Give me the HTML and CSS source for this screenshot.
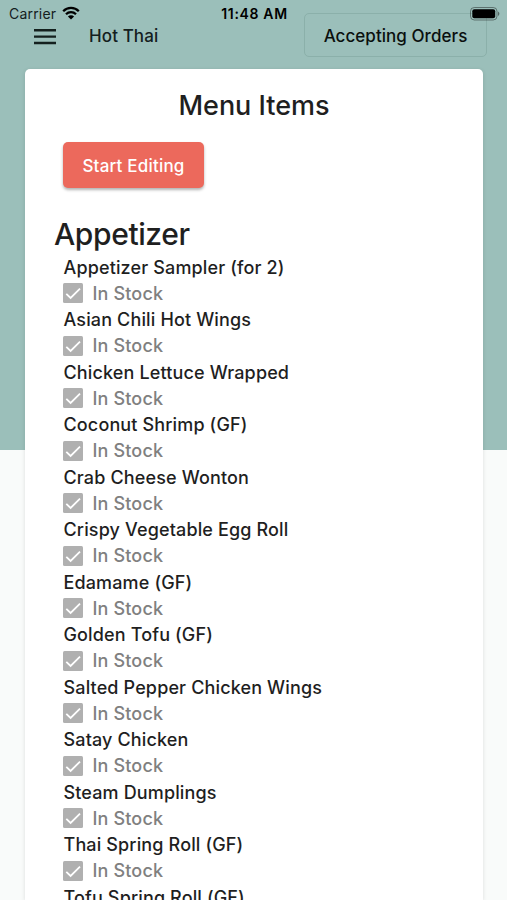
FILE: index.html
```
<!DOCTYPE html>
<html lang="en">

<head>
    <meta charset="utf-8">
    <title>Hot Thai - Menu Items</title>
    <link rel="stylesheet" href="styles.css">
</head>

<body>
    <div class="status-bar">
        <div class="carrier">
            <span>Carrier</span>
            <svg class="wifi" viewBox="0 0 18 14">
                <path d="M1.2 5.2a11 11 0 0 1 15.6 0M4 8.2a7.1 7.1 0 0 1 10 0" fill="none" stroke="#000" stroke-width="2.3" />
                <path d="M9 13.6L5.9 10.5a4.4 4.4 0 0 1 6.2 0z" />
            </svg>
        </div>
        <span class="time">11:48 AM</span>
        <div class="power">
            <svg class="battery" viewBox="0 0 30 14">
                <rect x="0.5" y="0.5" width="26.5" height="12.5" rx="3.8" fill="none" stroke="#000" stroke-opacity="0.4" />
                <rect x="2.3" y="2.3" width="22.9" height="8.9" rx="2" />
                <path d="M28 4.5a2.6 2.6 0 0 1 0 4.6z" fill-opacity="0.45" />
            </svg>
        </div>
    </div>

    <header class="app-bar">
        <svg class="menu-icon" viewBox="0 0 22 16">
            <path d="M0 0h22v2.4H0zM0 6.4h22v2.4H0zM0 12.8h22v2.4H0z" />
        </svg>
        <span class="restaurant">Hot Thai</span>
        <button class="orders-button">Accepting Orders</button>
    </header>

    <main class="card">
        <h1>Menu Items</h1>
        <button class="edit-button">Start Editing</button>
        <h2>Appetizer</h2>
        <ul id="items" class="items"></ul>
    </main>

    <script>
        var names = [
            'Appetizer Sampler (for 2)',
            'Asian Chili Hot Wings',
            'Chicken Lettuce Wrapped',
            'Coconut Shrimp (GF)',
            'Crab Cheese Wonton',
            'Crispy Vegetable Egg Roll',
            'Edamame (GF)',
            'Golden Tofu (GF)',
            'Salted Pepper Chicken Wings',
            'Satay Chicken',
            'Steam Dumplings',
            'Thai Spring Roll (GF)',
            'Tofu Spring Roll (GF)'
        ];
        var items = document.getElementById('items');

        names.forEach(name => {
            var item = document.createElement('li');
            item.innerHTML = `
                <div class="name">${name}</div>
                <div class="stock">
                    <svg class="checkbox" viewBox="0 0 20 20">
                        <rect width="20" height="20" rx="1.5" fill="#b0b0b0" />
                        <path d="M3.3 10.8l4.3 4.2L17 5.6" fill="none" stroke="#fff" stroke-width="1.8" />
                    </svg>
                    <span>In Stock</span>
                </div>`;
            items.appendChild(item);
        });
    </script>
</body>

</html>
```
FILE: styles.css
```
* {
    box-sizing: border-box;
}

body {
    margin: 0;
    height: 900px;
    overflow: hidden;
    background: linear-gradient(#9bbfba 450px, #f9fbfa 450px);
    color: #1f1f1f;
    font-family: Inter, "Liberation Sans", sans-serif;
}

button {
    font-family: inherit;
    font-weight: 500;
}

/* sits on top of the app bar */
.status-bar {
    position: absolute;
    top: 0;
    left: 0;
    right: 0;
    z-index: 1;
    display: flex;
    height: 27px;
    padding: 0 7px 0 9px;
    align-items: center;
    color: #000;
    font-size: 14px;
}

.carrier {
    display: flex;
    flex: 1;
    align-items: center;
    gap: 6px;
    letter-spacing: 0.2px;
    color: #14201e;
}

.wifi {
    width: 18px;
    height: 14px;
    margin-top: -2px;
}

.time {
    font-weight: 600;
    font-size: 14px;
    letter-spacing: 0.65px;
}

.power {
    display: flex;
    flex: 1;
    justify-content: flex-end;
}

.battery {
    width: 30px;
    height: 14px;
}

.app-bar {
    display: flex;
    align-items: center;
    height: 69px;
    padding: 1px 20px 0 34px;
}

.menu-icon {
    width: 22px;
    height: 16px;
    margin-top: 3px;
    fill: #14201e;
}

.restaurant {
    flex: 1;
    margin: 1px 0 0 33px;
    color: #14201e;
    font-size: 17px;
    font-weight: 500;
    letter-spacing: 0.1px;
}

.orders-button {
    width: 183px;
    height: 44px;
    padding: 1px 0 0;
    border: 1px solid #8bb0aa;
    border-radius: 5px;
    background: none;
    color: #0a0f0e;
    font-size: 17px;
    letter-spacing: 0.05px;
}

.card {
    height: 831px;
    margin: 0 24px 0 25px;
    padding: 20px 29px 0;
    overflow: hidden;
    border-radius: 5px 5px 0 0;
    background: #fff;
    box-shadow: 0 1px 4px rgba(0, 0, 0, 0.12);
}

h1 {
    margin: 0;
    font-size: 27px;
    font-weight: 450;
    line-height: 34px;
    text-align: center;
}

.edit-button {
    display: block;
    width: 141px;
    height: 46px;
    margin: 19px 0 0 9px;
    padding: 1px 0 0;
    border: none;
    border-radius: 5px;
    background: #ec695c;
    box-shadow: 0 2px 3px rgba(0, 0, 0, 0.3);
    color: #fff;
    font-size: 17px;
    letter-spacing: 0.2px;
}

h2 {
    margin: 27px 0 0;
    font-size: 30px;
    font-weight: 450;
    line-height: 38px;
    letter-spacing: -0.4px;
}

.items {
    margin: 0;
    padding: 1.5px 0 0 9px;
    list-style: none;
    font-size: 18px;
}

.items li {
    height: 52.54px;
}

.name {
    padding-left: 0.5px;
    font-weight: 500;
    line-height: 26.5px;
    letter-spacing: 0.14px;
}

.stock {
    display: flex;
    align-items: center;
    gap: 9.5px;
    height: 25px;
    margin-top: -0.5px;
    color: #808080;
    font-weight: 500;
    letter-spacing: 0.15px;
}

.checkbox {
    width: 20px;
    height: 20px;
}
```
